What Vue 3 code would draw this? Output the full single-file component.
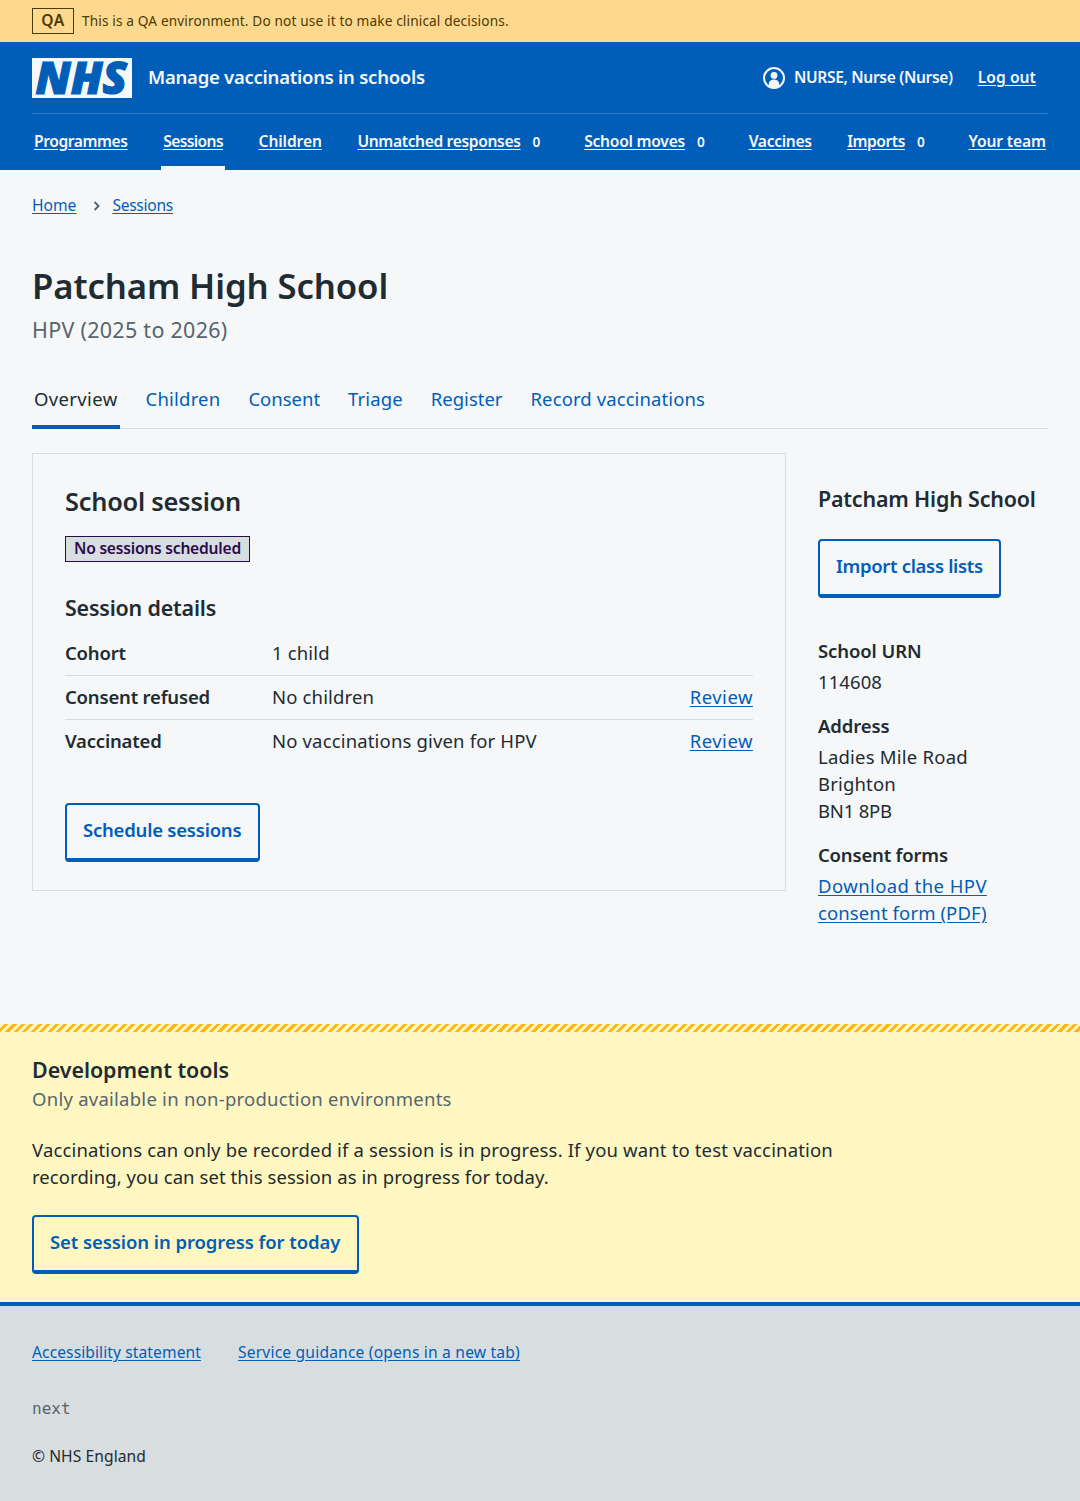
<script setup>
const navItems = [
  { label: 'Programmes' },
  { label: 'Sessions', current: true },
  { label: 'Children' },
  { label: 'Unmatched responses', count: 0 },
  { label: 'School moves', count: 0 },
  { label: 'Vaccines' },
  { label: 'Imports', count: 0 },
  { label: 'Your team' },
]
const tabs = ['Overview', 'Children', 'Consent', 'Triage', 'Register', 'Record vaccinations']
const rows = [
  { key: 'Cohort', value: '1 child' },
  { key: 'Consent refused', value: 'No children', action: 'Review' },
  { key: 'Vaccinated', value: 'No vaccinations given for HPV', action: 'Review' },
]
</script>

<template>
  <div class="page">
    <div class="environment">
      <strong class="environment-tag">QA</strong>
      <span class="environment-text">This is a QA environment. Do not use it to make clinical decisions.</span>
    </div>

    <header class="header">
      <div class="header-top">
        <svg class="logo" viewBox="0 0 100 40" role="img" aria-label="NHS">
          <rect width="100" height="40" fill="#f6f7f9" />
          <text x="3.5" y="35.6" textLength="91.5" lengthAdjust="spacingAndGlyphs">NHS</text>
        </svg>
        <a class="service">Manage vaccinations in schools</a>
        <div class="account">
          <svg class="user-icon" viewBox="0 0 22 22" aria-hidden="true">
            <circle cx="11" cy="11" r="10" fill="none" stroke="#f6f7f9" stroke-width="2" />
            <circle cx="11" cy="8.4" r="3.4" fill="#f6f7f9" />
            <path d="M5.8 19.8v-3a5.2 4.2 0 0 1 10.4 0v3A10.4 10.4 0 0 1 5.8 19.8z" fill="#f6f7f9" />
          </svg>
          <span class="user">NURSE, Nurse (Nurse)</span>
          <a class="logout">Log out</a>
        </div>
      </div>
      <nav class="nav">
        <div v-for="item in navItems" :key="item.label" class="nav-item" :class="{ current: item.current }">
          <a>{{ item.label }}</a><span v-if="item.count !== undefined" class="count">{{ item.count }}</span>
        </div>
      </nav>
    </header>

    <div class="container">
      <nav class="breadcrumb">
        <a class="crumb-home">Home</a>
        <svg viewBox="0 0 8 12" aria-hidden="true"><path d="M1.6 2l4 4-4 4" /></svg>
        <a class="crumb-sessions">Sessions</a>
      </nav>

      <h1>Patcham High School</h1>
      <p class="caption">HPV (2025 to 2026)</p>

      <nav class="tabs">
        <a v-for="(tab, i) in tabs" :key="tab" :class="{ active: i === 0 }">{{ tab }}</a>
      </nav>

      <div class="columns">
        <section class="card">
          <h2>School session</h2>
          <strong class="tag">No sessions scheduled</strong>
          <h3>Session details</h3>
          <dl class="summary">
            <div v-for="row in rows" :key="row.key" class="summary-row">
              <dt>{{ row.key }}</dt>
              <dd>{{ row.value }}</dd>
              <dd v-if="row.action" class="action"><a class="link">{{ row.action }}</a></dd>
            </div>
          </dl>
          <button class="button schedule">Schedule sessions</button>
        </section>

        <aside class="aside">
          <h3>Patcham High School</h3>
          <button class="button import">Import class lists</button>
          <dl class="details">
            <dt class="urn">School URN</dt>
            <dd class="number">114608</dd>
            <dt class="address">Address</dt>
            <dd>
              <span class="street">Ladies Mile Road</span><br />
              <span class="city">Brighton</span><br />
              <span class="postcode">BN1 8PB</span>
            </dd>
            <dt>Consent forms</dt>
            <dd>
              <a class="link"><span class="download">Download the HPV</span><br /><span class="form">consent form (PDF)</span></a>
            </dd>
          </dl>
        </aside>
      </div>
    </div>

    <section class="devtools">
      <div class="stripes"></div>
      <div class="devtools-body">
        <h3>Development tools</h3>
        <p class="hint">Only available in non-production environments</p>
        <p class="note">
          <span class="line-one">Vaccinations can only be recorded if a session is in progress. If you want to test vaccination</span><br />
          <span class="line-two">recording, you can set this session as in progress for today.</span>
        </p>
        <button class="button progress">Set session in progress for today</button>
      </div>
    </section>

    <footer class="footer">
      <div class="footer-links">
        <a class="accessibility">Accessibility statement</a>
        <a class="guidance">Service guidance (opens in a new tab)</a>
      </div>
      <p class="version">next</p>
      <p class="copyright">© NHS England</p>
    </footer>
  </div>
</template>

<style>
body {
  margin: 0;
  background: #d8dde0;
}
</style>

<style scoped>
.page {
  width: 1080px;
  height: 1501px;
  display: flex;
  flex-direction: column;
  background: #f6f7f9;
  color: #212b32;
  font: 400 18.5px/27px "Noto Sans", "Open Sans", sans-serif;
  white-space: nowrap;
}
.page * { box-sizing: border-box; }
h1, h2, h3, p, dl, dt, dd { margin: 0; font-weight: 600; }
p, dd { font-weight: 400; }

.environment {
  height: 42px;
  padding: 8px 32px;
  display: flex;
  gap: 8px;
  background: #fcd98f;
  color: #4d3a00;
}
.environment-tag {
  width: 42px;
  height: 26px;
  border: 1px solid #4d3a00;
  font-size: 15.6px;
  font-weight: 600;
  line-height: 23px;
  letter-spacing: 0.5px;
  text-align: center;
}
.environment-text { font-size: 13.65px; line-height: 26px; letter-spacing: 0.14px; }

.header { height: 128px; padding: 0 32px; background: #005eb8; color: #f6f7f9; }
.header-top {
  height: 72px;
  display: flex;
  align-items: center;
  border-bottom: 1px solid #337ec6;
}
.logo { width: 100px; height: 40px; flex: none; overflow: visible; }
.logo text {
  fill: #005eb8;
  stroke: #005eb8;
  stroke-width: 1.2px;
  font: italic 800 43.5px/1 "Open Sans", "Noto Sans", sans-serif;
}
.service { margin: 0 0 2px 16px; font-weight: 600; letter-spacing: -0.25px; }
.account {
  margin-left: auto;
  padding-right: 12px;
  display: flex;
  align-items: center;
  font-size: 15.6px;
  font-weight: 600;
}
.user-icon { width: 22px; height: 22px; margin-right: 9px; }
.user { letter-spacing: -0.34px; }
.logout { margin-left: 25px; letter-spacing: 0.05px; text-decoration: underline; text-underline-offset: 2px; }

.nav {
  height: 56px;
  display: flex;
  justify-content: space-between;
  font-size: 15.6px;
  font-weight: 600;
  line-height: 55px;
}
.nav-item { padding: 0 2px; display: flex; }
.nav-item.current { border-bottom: 4px solid #f6f7f9; }
.nav-item a { text-decoration: underline; text-underline-offset: 2px; }
.nav-item:nth-child(1) { letter-spacing: -0.42px; }
.nav-item:nth-child(2) { letter-spacing: -0.62px; }
.nav-item:nth-child(3) { letter-spacing: -0.11px; }
.nav-item:nth-child(4) { letter-spacing: -0.35px; }
.nav-item:nth-child(5) { letter-spacing: -0.24px; }
.nav-item:nth-child(6) { letter-spacing: -0.31px; }
.nav-item:nth-child(7) { letter-spacing: -0.47px; }
.nav-item:nth-child(8) { letter-spacing: -0.13px; }
.count { width: 28px; padding-left: 12px; font-size: 13.65px; }

.container { height: 854px; padding: 23px 32px 0; }
.breadcrumb {
  height: 24px;
  display: flex;
  align-items: center;
  color: #005eb8;
  font-size: 15.6px;
  line-height: 24px;
}
.breadcrumb a { text-decoration: underline; text-underline-offset: 2px; }
.breadcrumb svg { width: 8px; height: 12px; margin: 2px 11px 0 17px; fill: none; stroke: #4c6272; stroke-width: 1.8; }
.crumb-sessions { letter-spacing: -0.29px; }
h1 { margin-top: 47px; font-size: 34.7px; font-weight: 640; line-height: 44px; letter-spacing: -0.1px; }
.caption { margin-top: 6px; color: #56656d; font-size: 21.45px; line-height: 32px; letter-spacing: 0.3px; }

.tabs {
  height: 58px;
  margin-top: 25px;
  display: flex;
  gap: 24px;
  border-bottom: 1px solid #d8dde0;
  line-height: 55px;
}
.tabs a { height: 58px; padding: 0 2px; color: #005eb8; }
.tabs .active { border-bottom: 4px solid #005eb8; color: #212b32; }
.tabs a:nth-child(1) { letter-spacing: 0.36px; }
.tabs a:nth-child(2) { letter-spacing: 0.2px; }
.tabs a:nth-child(4) { letter-spacing: 0.12px; }
.tabs a:nth-child(6) { letter-spacing: 0.1px; }

.columns { margin-top: 24px; display: flex; align-items: flex-start; gap: 32px; }
.card { width: 754px; height: 438px; padding: 31px 32px; border: 1px solid #d8dde0; }
h2 { font-size: 25.35px; line-height: 32px; letter-spacing: -0.23px; }
.tag {
  width: 185px;
  height: 26px;
  margin-top: 19px;
  padding-left: 8px;
  display: block;
  border: 1px solid #2a0b4d;
  background: #d8dde0;
  color: #2a0b4d;
  font-size: 15.6px;
  font-weight: 600;
  line-height: 23px;
  letter-spacing: -0.22px;
}
h3 { font-size: 21.45px; line-height: 32px; letter-spacing: -0.19px; }
.card h3 { margin-top: 30px; }
.summary { margin-top: 8px; }
.summary-row { height: 44px; display: flex; border-bottom: 1px solid #d8dde0; line-height: 42px; }
.summary-row:last-child { border-bottom: 0; }
dt { letter-spacing: -0.19px; }
.summary dt { width: 207px; }
.summary dd { flex: 1; letter-spacing: 0.16px; }
.summary .action { flex: none; letter-spacing: 0.5px; }
.link { color: #005eb8; text-decoration: underline; text-underline-offset: 2px; }
.button {
  height: 59px;
  padding: 0 0 4px 16px;
  display: block;
  border: 2px solid #005eb8;
  border-bottom-width: 4px;
  border-radius: 4px;
  background: transparent;
  color: #005eb8;
  font: inherit;
  font-weight: 600;
  text-align: left;
}
.schedule { width: 194.5px; margin-top: 39px; letter-spacing: -0.22px; }

.aside { padding-top: 30px; }
.aside h3 { letter-spacing: -0.19px; }
.import { width: 182.5px; margin-top: 24px; letter-spacing: -0.32px; }
.details { margin-top: 39px; }
.details dt { margin-bottom: 4px; }
.details dd { margin-bottom: 17px; }
.urn, .address { letter-spacing: -0.1px; }
.number { letter-spacing: 0.08px; }
.street { letter-spacing: 0.22px; }
.city { letter-spacing: 0.17px; }
.postcode { letter-spacing: -0.19px; }
.download { letter-spacing: 0.42px; }
.form { letter-spacing: 0.11px; }

.devtools { height: 278px; background: #fff7c2; }
.stripes {
  height: 8px;
  background: repeating-linear-gradient(-45deg, #fff7c2 0 1.3px, #ffb81c 1.3px 4.3px, #fff7c2 4.3px 6px);
}
.devtools-body { padding: 22px 32px 0; }
.devtools h3 { letter-spacing: -0.04px; }
.hint { margin-top: -1px; color: #56656d; letter-spacing: 0.25px; }
.note { margin-top: 24px; }
.line-one { letter-spacing: 0.15px; }
.line-two { letter-spacing: 0.07px; }
.progress { width: 326.5px; margin-top: 25px; letter-spacing: -0.08px; }

.footer {
  flex: 1;
  padding: 34px 32px 0;
  border-top: 4px solid #005eb8;
  background: #d8dde0;
  font-size: 15.6px;
  line-height: 24px;
}
.footer-links { display: flex; gap: 37px; color: #005eb8; }
.footer-links a { text-decoration: underline; text-underline-offset: 2px; }
.accessibility { letter-spacing: 0.09px; }
.guidance { letter-spacing: 0.19px; }
.version { margin-top: 33px; color: #56656d; font: 16px/24px "DejaVu Sans Mono", monospace; }
.copyright { margin-top: 23px; letter-spacing: 0.08px; }
</style>
